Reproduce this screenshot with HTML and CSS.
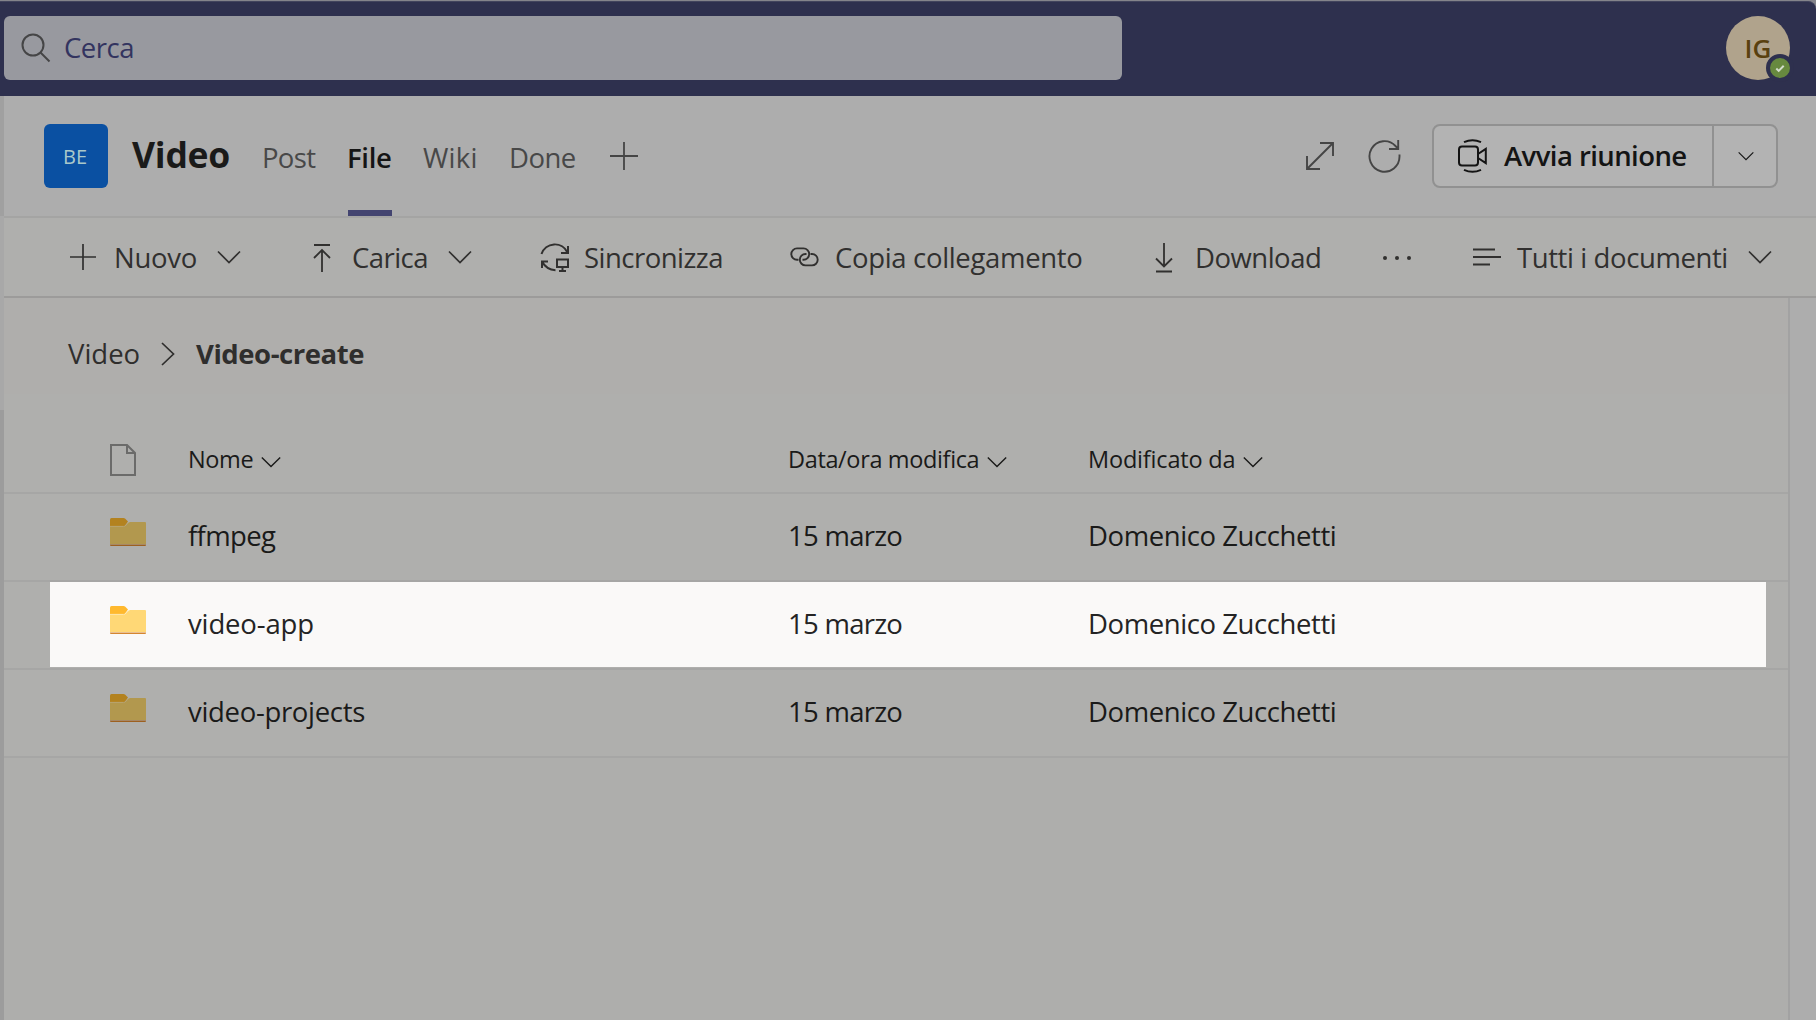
FILE: index.html
```html
<!DOCTYPE html>
<html lang="it">
<head>
<meta charset="utf-8">
<title>Video - File</title>
<link rel="stylesheet" href="styles.css">
</head>
<body>
<svg class="defs" width="0" height="0">
  <symbol id="chev" viewBox="0 0 24 14"><path d="M1 1.5 12 12.5 23 1.5" fill="none" stroke="currentColor" stroke-width="1.7"/></symbol>
  <symbol id="folder" viewBox="0 0 36 28">
    <path class="f-tab" d="M0 9V1.5Q0 0 1.5 0H13.500Q14.500 0 15.300.8L18 3.500 14 9Z"/>
    <path class="f-edge" d="M0 26.500H36V27Q36 28 35 28H1Q0 28 0 27Z"/>
    <path class="f-body" d="M0 8.500H13.500Q14.700 8.500 15.500 7.700L18.500 4.700Q19.200 4 20.200 4H35Q36 4 36 5V27H0Z"/>
    <path class="f-line" d="M0 8.400H13.500Q14.700 8.400 15.500 7.600L18.500 4.600" fill="none"/>
  </symbol>
</svg>
<div class="app">
  <header class="topbar">
    <div class="search">
      <svg width="30" height="30" viewBox="0 0 30 30" fill="none" stroke="currentColor" stroke-width="2"><circle cx="12" cy="12" r="10.500"/><path d="m19.500 19.500 9 9"/></svg>
      <span>Cerca</span>
    </div>
    <div class="avatar">IG
      <span class="presence"><svg width="20" height="20" viewBox="0 0 20 20" fill="none" stroke="currentColor" stroke-width="2"><path d="m6.300 10.500 2.400 2.400 5-5.200"/></svg></span>
    </div>
  </header>
  <div class="body">
    <aside class="rail"></aside>
    <main class="main">
      <section class="channel">
        <div class="tile">BE</div>
        <h1>Video</h1>
        <nav class="tabs">
          <a class="tab post">Post</a>
          <a class="tab file active">File</a>
          <a class="tab wiki">Wiki</a>
          <a class="tab done">Done</a>
        </nav>
        <svg class="add" width="28" height="28" viewBox="0 0 28 28" fill="none" stroke="currentColor" stroke-width="1.800"><path d="M14 0V28M0 14H28"/></svg>
        <div class="actions">
          <svg class="expand" width="28" height="28" viewBox="0 0 28 28" fill="none" stroke="currentColor" stroke-width="1.900"><path d="M1.500 26.500 26.500 1.500M14 1H27V14M1 14V27H14"/></svg>
          <svg class="refresh" width="33" height="34" viewBox="0 0 33 34" fill="none" stroke="currentColor" stroke-width="1.900"><path d="M31.500 15.500V17A15 15.300 0 1 1 27.500 7L30 9.500M30.200 1V10H21"/></svg>
          <div class="meet">
            <div class="meet-main">
              <svg width="30" height="36" viewBox="0 0 30 36" fill="none" stroke="currentColor" stroke-width="2"><rect x="1" y="8.500" width="19" height="19" rx="3"/><path d="M20 16 27.800 10.800V25.200L20 20M6 4.200Q14.500.2 23 4.200M6 31.800Q14.500 35.800 23 31.800"/></svg>
              <span>Avvia riunione</span>
            </div>
            <div class="meet-more"><svg width="16" height="10"><use href="#chev"/></svg></div>
          </div>
        </div>
      </section>
      <section class="toolbar">
        <div class="cmd">
          <svg width="28" height="28" viewBox="0 0 28 28" fill="none" stroke="currentColor" stroke-width="1.700"><path d="M14 1V27M1 14H27"/></svg>
          <span class="t-nuovo">Nuovo</span><svg class="chev" width="24" height="14"><use href="#chev"/></svg>
        </div>
        <div class="cmd carica">
          <svg width="18" height="30" viewBox="0 0 18 30" fill="none" stroke="currentColor" stroke-width="1.800"><path d="M1 2H17M9 29V7M1 15 9 7 17 15"/></svg>
          <span class="t-carica">Carica</span><svg class="chev" width="24" height="14"><use href="#chev"/></svg>
        </div>
        <div class="cmd sync">
          <svg width="30" height="30" viewBox="0 0 30 30" fill="none" stroke="currentColor" stroke-width="2"><path d="M1.500 12A14 14 0 0 1 27.500 10.500M28 4V11H21M8 19.500H2V26M2 19.500Q6.500 27.800 15.500 28.200"/><path d="M17 17.500H28V25H17ZM22.500 25V28.500M19 29H26"/></svg>
          <span>Sincronizza</span>
        </div>
        <div class="cmd copy">
          <svg width="30" height="20" viewBox="0 0 30 20" fill="none" stroke="currentColor" stroke-width="1.900"><path d="M8.500 12.800H7A5.700 5.700 0 0 1 7 1.400H13.500A5.700 5.700 0 0 1 13.500 12.800H12.500"/><path d="M20.500 7H22A5.700 5.700 0 0 1 22 18.400H15.500A5.700 5.700 0 0 1 15.500 7H16.500"/></svg>
          <span>Copia collegamento</span>
        </div>
        <div class="cmd down">
          <svg width="20" height="30" viewBox="0 0 20 30" fill="none" stroke="currentColor" stroke-width="1.800"><path d="M10 0V23.500M2 15.500 10 23.500 18 15.500M2 28.500H18"/></svg>
          <span>Download</span>
        </div>
        <div class="cmd more"><svg width="30" height="6" viewBox="0 0 30 6" fill="currentColor"><circle cx="3" cy="3" r="2"/><circle cx="15" cy="3" r="2"/><circle cx="27" cy="3" r="2"/></svg></div>
        <div class="cmd view">
          <svg width="28" height="18" viewBox="0 0 28 18" fill="none" stroke="currentColor" stroke-width="1.900"><path d="M0 1.500H22M0 9H28M0 16.500H17"/></svg>
          <span>Tutti i documenti</span><svg class="chev" width="24" height="14"><use href="#chev"/></svg>
        </div>
      </section>
      <div class="content">
        <div class="library">
          <div class="crumbs">
            <span class="parent">Video</span>
            <svg width="14" height="26" viewBox="0 0 14 26" fill="none" stroke="currentColor" stroke-width="1.700"><path d="M1 2 12.500 13 1 24"/></svg>
            <span class="current">Video-create</span>
          </div>
          <div class="row head">
            <div class="cells">
              <svg width="26" height="32" viewBox="0 0 26 32" fill="none" stroke="currentColor" stroke-width="2"><path d="M1 1H17L25 9V31H1ZM17 1V9H25"/></svg>
              <span class="h-nome">Nome <svg width="20" height="12"><use href="#chev"/></svg></span>
              <span class="h-data">Data/ora modifica <svg width="20" height="12"><use href="#chev"/></svg></span>
              <span class="h-mod">Modificato da <svg width="20" height="12"><use href="#chev"/></svg></span>
            </div>
          </div>
          <div class="row"><div class="cells">
            <svg class="folder" width="36" height="28"><use href="#folder"/></svg>
            <span class="n-ffmpeg">ffmpeg</span><span class="date">15 marzo</span><span class="who">Domenico Zucchetti</span>
          </div></div>
          <div class="row"><div class="cells selected">
            <svg class="folder" width="36" height="28"><use href="#folder"/></svg>
            <span class="n-app">video-app</span><span class="date">15 marzo</span><span class="who">Domenico Zucchetti</span>
          </div></div>
          <div class="row"><div class="cells">
            <svg class="folder" width="36" height="28"><use href="#folder"/></svg>
            <span class="n-projects">video-projects</span><span class="date">15 marzo</span><span class="who">Domenico Zucchetti</span>
          </div></div>
        </div>
      </div>
    </main>
  </div>
</div>
</body>
</html>
```
FILE: styles.css
```css
* { box-sizing: border-box; }
body {
  margin: 0;
  font: 27.5px/38px "Open Sans", "Noto Sans", sans-serif;
  color: #1a1a19;
  background: #adadad;
  overflow: hidden;
}
svg { display: block; flex: none; }
.defs { position: absolute; }
.app { width: 1816px; height: 1020px; display: flex; flex-direction: column; background: #84848b; }
span, a, h1 { white-space: nowrap; }

.topbar {
  height: 95px; margin-top: 1px; padding: 0 26px 2px 4px;
  display: flex; align-items: center; justify-content: space-between;
  background: #2e304e; border-top: 1px solid #42445d; border-top-right-radius: 8px;
}
.search {
  width: 1118px; height: 64px; padding-left: 17px; border-radius: 6px;
  display: flex; align-items: center; gap: 13px;
  background: #98999f; color: #33345f; letter-spacing: -.5px;
}
.search svg { color: #454546; }
.avatar {
  position: relative; width: 64px; height: 64px; border-radius: 50%;
  display: flex; align-items: center; justify-content: center;
  background: #b0a38c; color: #59400f; font-size: 26px; font-weight: 600;
  padding-bottom: 1px;
}
.presence {
  position: absolute; right: -4px; bottom: -2px;
  width: 28px; height: 28px; border-radius: 50%;
  border: 4px solid #2e304e; background: #67893f; color: #d3dccb;
}

.body { flex: 1; display: flex; min-height: 0; }
.rail { width: 4px; background: linear-gradient(#a0a0a0 120px, #a8a8a8 120px, #a8a8a8 314px, #9c9c9c 314px); }
.main { flex: 1; display: flex; flex-direction: column; }

.channel {
  height: 122px; padding: 0 38px 0 40px; display: flex; align-items: center;
  background: #adadad; border-bottom: 2px solid #a4a4a3;
}
.tile {
  width: 64px; height: 64px; border-radius: 6px; margin-right: 24px;
  display: flex; align-items: center; justify-content: center;
  background: #0a50a2; color: #a9c8ca; font-size: 20px; padding: 2px 2px 0 0;
}
h1 { margin: 0 0 4px; width: 130px; font-size: 35.5px; line-height: 48px; letter-spacing: -.25px; }
.tabs { display: grid; grid-template-columns: 86px 75px 86px 101px; align-self: stretch; color: #484848; }
.tab { display: flex; align-items: center; height: 120px; padding-top: 3px; }
.post { letter-spacing: -.67px; }
.wiki { letter-spacing: .2px; }
.done { letter-spacing: -.5px; }
.active {
  width: 44px; padding: 9px 0 0; color: #151515; font-weight: 600;
  letter-spacing: -.3px; text-indent: -1px; border-bottom: 6px solid #434470;
}
.add { color: #454545; }
.actions { margin-left: auto; display: flex; align-items: center; color: #454545; }
.refresh { margin: 0 31px 0 34px; }
.meet {
  width: 346px; height: 64px; border: 2px solid #919191; border-radius: 8px;
  display: flex; background: #b3b3b3; color: #141414; font-weight: 600;
}
.meet-main { width: 280px; padding-left: 24px; display: flex; align-items: center; gap: 16px; border-right: 2px solid #919191; letter-spacing: -.57px; }
.meet-more { flex: 1; display: flex; align-items: center; justify-content: center; padding-left: 1px; }

.toolbar {
  height: 80px; padding-left: 65px; display: grid; align-items: center;
  grid-template-columns: 244px 227px 250px 362px 230px 88px 1fr;
  background: #afafad; color: #31302f; border-bottom: 2px solid #9c9b9a;
}
.cmd { display: flex; align-items: center; }
.cmd span { margin-left: 17px; padding-top: 2px; }
.t-nuovo { width: 103px; letter-spacing: -.25px; }
.t-carica { width: 96px; letter-spacing: -.54px; }
.carica span { margin-left: 21px; }
.carica > svg:first-child, .down > svg { margin-top: 2px; }
.sync { letter-spacing: -.52px; }
.sync span { margin-left: 14px; }
.copy { letter-spacing: -.33px; }
.copy span { margin-left: 15px; }
.down { padding-left: 2px; letter-spacing: -.5px; }
.down span { margin-left: 21px; }
.more { padding-top: 1px; }
.view { padding-left: 3px; letter-spacing: -.4px; }
.view span { width: 231px; margin-left: 16px; }

.content { flex: 1; display: flex; background: #adadad; }
.library { width: 1786px; background: #aeaeac; border-right: 2px solid #a2a2a2; }
.crumbs {
  height: 96px; padding: 15px 0 0 64px; display: flex; align-items: center;
  background: #afaeac; color: #2f2e2d;
}
.parent { width: 93px; }
.current { margin-left: 21px; font-weight: 700; letter-spacing: -.45px; }

.row { height: 88px; background: #afafad; border-bottom: 2px solid #a6a6a5; }
.cells {
  height: 86px; margin: 0 22px 0 46px; padding: 0 0 2px 60px;
  display: grid; grid-template-columns: 78px 600px 300px 1fr; align-items: center;
}
.selected { height: 85px; padding-bottom: 1px; background: #faf9f8; color: #242424; }
.head { height: 100px; font-size: 23.5px; }
.head .cells { height: 98px; padding: 32px 0 0 60px; }
.head .cells > svg { color: #6b6b6a; margin-top: 2px; }
.head span { display: flex; align-items: center; gap: 8px; }
.head span svg { margin-top: 5px; }
.h-nome { letter-spacing: -.4px; }
.h-data { letter-spacing: -.36px; }
.h-mod { letter-spacing: -.18px; }
.n-ffmpeg { letter-spacing: -.65px; }
.n-app { letter-spacing: -.15px; }
.n-projects { letter-spacing: -.32px; }
.date { letter-spacing: -.73px; }
.who { letter-spacing: -.42px; }

.folder { --tab: #b3821f; --front: #b2984e; --edge: #9d6020; --line: #b8a574; margin-top: -8px; }
.selected .folder { --tab: #ffb92e; --front: #ffd876; --edge: #d5862f; --line: #ffe9b0; }
.f-tab { fill: var(--tab); }
.f-body { fill: var(--front); }
.f-edge { fill: var(--edge); }
.f-body { clip-path: inset(0 0 1px 0); }
.f-line { stroke: var(--line); stroke-width: 1; }
```
